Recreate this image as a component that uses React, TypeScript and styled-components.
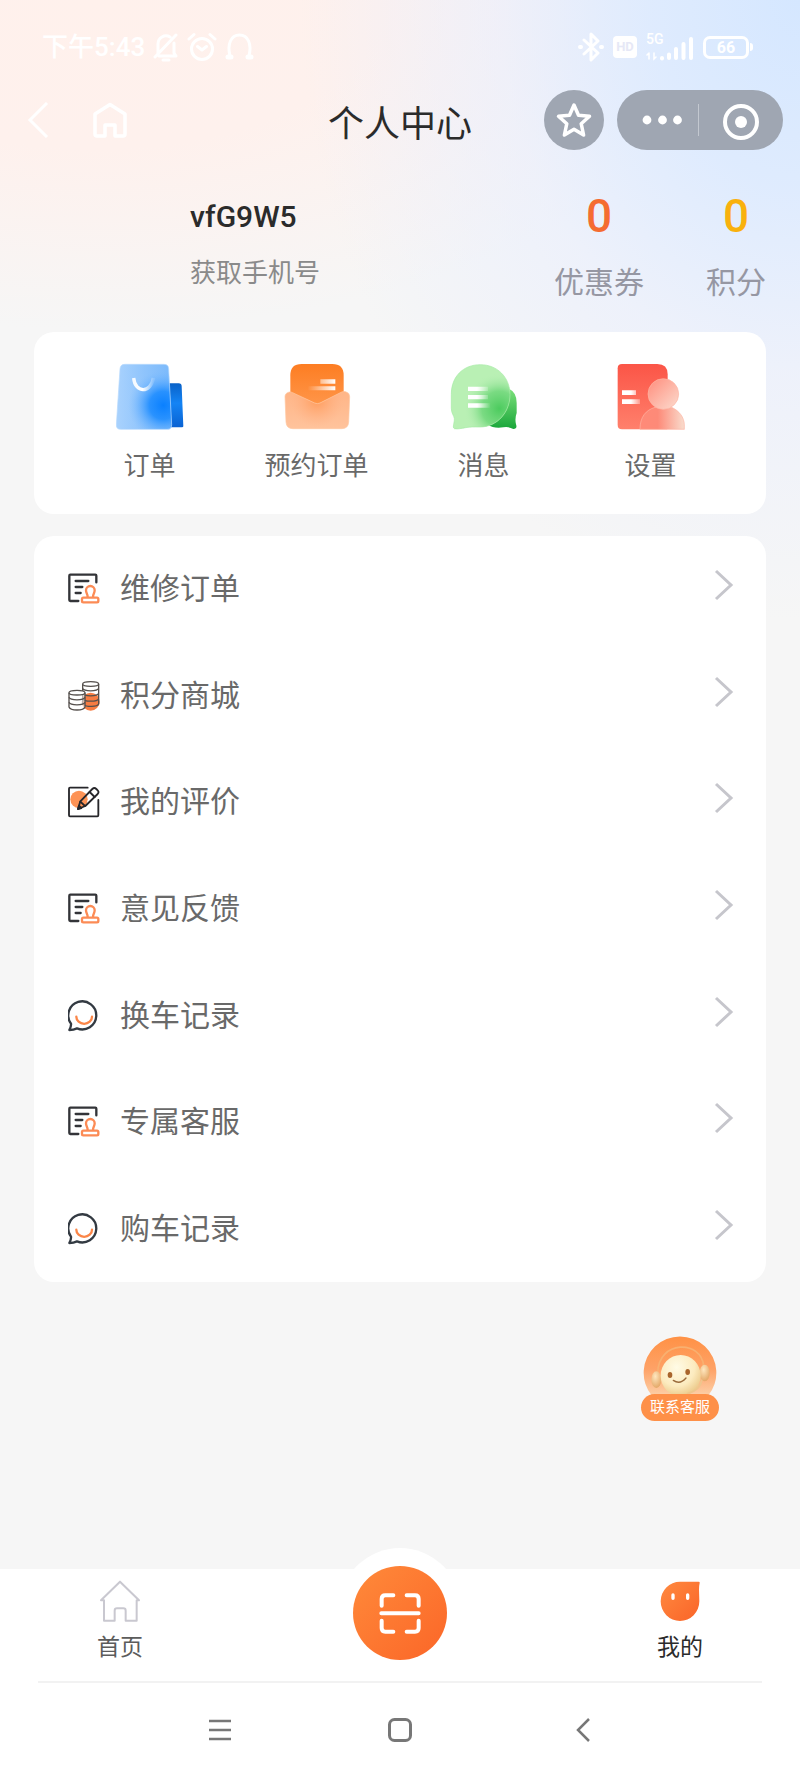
import React from "react";
import styled, { createGlobalStyle } from "styled-components";

const GlobalStyle = createGlobalStyle`
  * { box-sizing: border-box; }
  body {
    margin: 0;
    background: #f7f7f7;
    font-family: Roboto, "Noto Sans CJK SC", sans-serif;
    color: #333;
  }
  button {
    border: 0;
    padding: 0;
    background: none;
    font: inherit;
    color: inherit;
    cursor: pointer;
  }
  a { color: inherit; text-decoration: none; }
  h1, h2, p, ul { margin: 0; padding: 0; font-weight: 400; }
  svg { display: block; flex: none; }
`;

const Page = styled.div`
  min-height: 100vh;
  display: flex;
  flex-direction: column;
  background:
    radial-gradient(ellipse 500px 620px at 100% 0, #d5e7ff 0%, rgba(220, 234, 255, 0.9) 30%, rgba(232, 238, 254, 0.6) 60%, rgba(246, 246, 246, 0) 100%) no-repeat,
    radial-gradient(ellipse 640px 330px at 12% 0, #fff1ec 0%, #fef1ed 45%, rgba(247, 247, 247, 0) 100%) no-repeat,
    #f6f6f6;
`;

/* ---------- status bar ---------- */

const StatusBar = styled.div`
  display: flex;
  align-items: center;
  justify-content: space-between;
  height: 84px;
  padding: 10px 47px 0 42px;
  color: #fff;
`;

const StatusGroup = styled.div<{ $gap: number }>`
  display: flex;
  align-items: center;
  gap: ${(p) => p.$gap}px;
`;

const Clock = styled.span`
  font-size: 26px;
  line-height: 28px;
  font-weight: 500;
`;

const HdBadge = styled.span`
  width: 24px;
  height: 22px;
  border-radius: 4px;
  background: #fff;
  color: #e6e8f6;
  font-size: 13px;
  line-height: 22px;
  font-weight: 700;
  text-align: center;
`;

const Network = styled.div`
  display: flex;
  flex-direction: column;
  height: 28px;
  font-size: 14px;
  line-height: 12px;
  font-weight: 500;
`;

const SignalRow = styled.div`
  display: flex;
  align-items: flex-end;
  margin-top: -8px;
`;

const Battery = styled.span`
  display: flex;
  align-items: center;
  gap: 1px;
  &::after {
    content: "";
    width: 3px;
    height: 8px;
    border-radius: 0 3px 3px 0;
    background: #fff;
  }
`;

const BatteryLevel = styled.span`
  width: 46px;
  height: 23px;
  border: 3px solid #fff;
  border-radius: 7px;
  font-size: 16px;
  line-height: 18px;
  font-weight: 700;
  text-align: center;
`;

/* ---------- navigation ---------- */

const NavBar = styled.header`
  display: grid;
  grid-template-columns: 1fr auto 1fr;
  align-items: center;
  height: 72px;
  padding: 0 17px;
`;

const NavLeft = styled.div`
  display: flex;
  align-items: center;
  gap: 44px;
  padding-left: 10px;
`;

const NavRight = styled.div`
  display: flex;
  justify-content: flex-end;
  gap: 13px;
`;

const Title = styled.h1`
  padding-top: 10px;
  font-size: 36px;
  line-height: 40px;
  color: #2b2b2b;
`;

const RoundButton = styled.button`
  display: grid;
  place-items: center;
  width: 60px;
  height: 60px;
  border-radius: 50%;
  background: #9fa6b2;
`;

const Capsule = styled.div`
  display: flex;
  align-items: center;
  width: 166px;
  height: 60px;
  padding: 0 1px 0 9px;
  border-radius: 30px;
  background: #9fa6b2;
`;

const CapsuleButton = styled.button`
  flex: 1 1 0;
  display: grid;
  place-items: center;
  height: 32px;
  & + & {
    flex-grow: 1.15;
    border-left: 1px solid #c3c8d0;
  }
`;

/* ---------- profile ---------- */

const Profile = styled.section`
  display: flex;
  justify-content: space-between;
  height: 176px;
  padding: 32px 34px 0 190px;
`;

const Identity = styled.div`
  display: flex;
  flex-direction: column;
  align-items: flex-start;
  gap: 18px;
  padding-top: 9px;
`;

const UserName = styled.h2`
  font-size: 30px;
  line-height: 40px;
  font-weight: 500;
  color: #2b2b2b;
`;

const PhoneButton = styled.button`
  font-size: 26px;
  line-height: 36px;
  color: #8a8a8a;
`;

const Stats = styled.div`
  display: flex;
  gap: 62px;
`;

const Stat = styled.a`
  display: flex;
  flex-direction: column;
  align-items: center;
  gap: 19px;
`;

const StatValue = styled.span<{ $color: string }>`
  font-size: 46px;
  line-height: 56px;
  font-weight: 500;
  color: ${(p) => p.$color};
`;

const StatLabel = styled.span`
  font-size: 30px;
  line-height: 40px;
  color: #9697a3;
`;

/* ---------- cards ---------- */

const Content = styled.main`
  display: flex;
  flex-direction: column;
  gap: 22px;
  padding: 0 34px;
`;

const ShortcutCard = styled.nav`
  display: grid;
  grid-template-columns: repeat(4, 1fr);
  padding: 31px 32px 28px;
  border-radius: 20px;
  background: #fff;
`;

const Shortcut = styled.a`
  display: flex;
  flex-direction: column;
  align-items: center;
  gap: 15px;
  font-size: 26px;
  line-height: 40px;
  color: #696969;
`;

const MenuCard = styled.ul`
  display: grid;
  grid-auto-rows: 1fr;
  min-height: 746px;
  border-radius: 20px;
  background: #fff;
  list-style: none;
`;

const MenuLink = styled.a`
  display: flex;
  align-items: center;
  gap: 20px;
  height: 100%;
  padding: 0 32px 0 34px;
  font-size: 30px;
  line-height: 40px;
  color: #696969;
`;

const MenuLabel = styled.span`
  flex: 1;
`;

const Arrow = styled.svg`
  margin-bottom: 8px;
`;

/* ---------- customer service ---------- */

const ServiceButton = styled.button`
  display: flex;
  flex-direction: column;
  align-items: center;
  align-self: flex-end;
  margin: 54px 81px 40px 0;
`;

const ServiceLabel = styled.span`
  width: 78px;
  margin-top: -2px;
  border-radius: 14px;
  background: #fe9048;
  color: #fff;
  font-size: 15px;
  line-height: 27px;
  font-weight: 400;
`;

/* ---------- bottom bars ---------- */

const TabBar = styled.nav`
  display: grid;
  grid-template-columns: 3fr 4fr 3fr;
  align-items: start;
  justify-items: center;
  height: 112px;
  margin-top: auto;
  background: #fff;
`;

const Tab = styled.a<{ $active?: boolean }>`
  display: flex;
  flex-direction: column;
  align-items: center;
  gap: 10px;
  padding-top: 11px;
  font-size: 23px;
  line-height: 32px;
  color: ${(p) => (p.$active ? "#2b2b2b" : "#5c5c5c")};
`;

const ScanHolder = styled.div`
  display: flex;
  align-items: flex-start;
  justify-content: center;
  width: 122px;
  height: 122px;
  margin-top: -21px;
  padding-top: 18px;
  border-radius: 50%;
  background: #fff;
`;

const ScanButton = styled.button`
  display: grid;
  place-items: center;
  width: 94px;
  height: 94px;
  border-radius: 50%;
  background: linear-gradient(135deg, #ff8a3a, #fb6628);
`;

const SystemBar = styled.div`
  background: #fff;
`;

const SystemKeys = styled.div`
  display: flex;
  justify-content: space-between;
  align-items: center;
  height: 97px;
  margin: 0 38px;
  padding: 0 168px 2px;
  border-top: 2px solid #f2f2f2;
`;

const SystemKey = styled.button`
  display: grid;
  place-items: center;
  width: 28px;
  height: 28px;
`;

/* ---------- icons ---------- */

const BellOffIcon = () => (
  <svg width="26" height="30" viewBox="0 0 26 30" fill="none" stroke="#fff" strokeWidth="3" strokeLinecap="round" strokeLinejoin="round">
    <path d="M5 21V12a8 8 0 0 1 12-7M21 11v10l2 3H6M2 25 23 3" />
    <path d="M10 28h6" />
  </svg>
);

const AlarmIcon = () => (
  <svg width="30" height="30" viewBox="0 0 30 30" fill="none" stroke="#fff" strokeWidth="3" strokeLinecap="round" strokeLinejoin="round">
    <circle cx="15" cy="17" r="10.5" />
    <path d="M2 7 7 2.500M28 7l-5-4.500M10.500 14.500 15 18l4.500-3.500" />
  </svg>
);

const HeadphonesIcon = () => (
  <svg width="29" height="30" viewBox="0 0 29 30" fill="none" stroke="#fff" strokeWidth="3" strokeLinecap="round">
    <path d="M5 24C2 12 6 3 14.500 3S27 12 24 24" />
    <path d="M3 25h3M23 25h3" strokeWidth="5" />
  </svg>
);

const BluetoothIcon = () => (
  <svg width="26" height="30" viewBox="0 0 26 30" fill="none" stroke="#fff" strokeWidth="3" strokeLinejoin="round" strokeLinecap="round">
    <path d="M6 8l14 13-7 7V2l7 7L6 22" />
    <path d="M2 15h1M23 15h1" strokeWidth="4" />
  </svg>
);

const SignalIcon = () => (
  <svg width="48" height="24" viewBox="0 0 48 24" fill="none" stroke="#fff" strokeLinecap="round">
    <path d="M3 16v6M1 18l2-2M8 16v6l2-2" strokeWidth="1.500" />
    <path d="M16 21v.5M23 17.500V21M30 12v9M37.500 7v14M45 2v19" strokeWidth="4" />
  </svg>
);

const BackIcon = () => (
  <svg width="22" height="36" viewBox="0 0 22 36" fill="none" stroke="#fff" strokeWidth="3">
    <path d="M20 1 3 18l17 17" />
  </svg>
);

const NavHomeIcon = () => (
  <svg width="34" height="36" viewBox="0 0 34 36" fill="none" stroke="#fff" strokeWidth="3.500" strokeLinejoin="round">
    <path d="M2 12 17 2.500 32 12v20q0 2-2 2h-8V23H12v11H4q-2 0-2-2Z" />
  </svg>
);

const StarIcon = () => (
  <svg width="36" height="36" viewBox="0 0 36 36" fill="none" stroke="#fff" strokeWidth="3.500" strokeLinejoin="round">
    <path d="m18 3 4.500 10.300 11 1-8.300 7.400L27.600 33 18 27.200 8.400 33l2.400-11.300L2.500 14.300l11-1Z" />
  </svg>
);

const MoreIcon = () => (
  <svg width="40" height="10" viewBox="0 0 40 10" fill="#fff">
    <circle cx="5" cy="5" r="4.400" />
    <circle cx="20.500" cy="5" r="4.400" />
    <circle cx="35.500" cy="5" r="4.400" />
  </svg>
);

const TargetIcon = () => (
  <svg width="36" height="36" viewBox="0 0 36 36">
    <circle cx="18" cy="18" r="16" fill="none" stroke="#fff" strokeWidth="4" />
    <circle cx="18" cy="18" r="6" fill="#fff" />
  </svg>
);

const BagIcon = () => (
  <svg width="68" height="68" viewBox="48 68 204 204">
    <defs>
      <linearGradient id="bagBack" x1="0" y1="0" x2="0" y2="1">
        <stop offset="0" stopColor="#0a62c8" />
        <stop offset=".45" stopColor="#1484f5" />
        <stop offset="1" stopColor="#0a62d2" />
      </linearGradient>
      <linearGradient id="bagFront" x1="0" y1="0" x2="1" y2="0">
        <stop offset="0" stopColor="#a9d2fd" />
        <stop offset=".5" stopColor="#8fc4fc" />
        <stop offset="1" stopColor="#7ab9fb" />
      </linearGradient>
      <radialGradient id="bagGlow" cx="190" cy="195" r="105" gradientUnits="userSpaceOnUse">
        <stop offset="0" stopColor="#0a80ff" />
        <stop offset=".4" stopColor="#1f8dff" stopOpacity=".9" />
        <stop offset="1" stopColor="#7dbcff" stopOpacity="0" />
      </radialGradient>
      <linearGradient id="bagHandle" x1="0" y1="0" x2="1" y2="0">
        <stop offset="0" stopColor="#fff" stopOpacity=".9" />
        <stop offset=".45" stopColor="#fff" />
        <stop offset="1" stopColor="#fff" stopOpacity=".15" />
      </linearGradient>
    </defs>
    <path d="M200 129h36q9 0 9 9l5 120q0 3-4 3h-46Z" fill="url(#bagBack)" />
    <path d="M74 72h118q13 0 14 13l9 168q0 14-13 14H62q-13 0-13-13L60 86q1-14 14-14Z" fill="url(#bagFront)" />
    <path d="M74 72h118q13 0 14 13l9 168q0 14-13 14H62q-13 0-13-13L60 86q1-14 14-14Z" fill="url(#bagGlow)" stroke="#b7dafd" strokeWidth="2" />
    <path d="M101 113c4 46 52 47 59 0" fill="none" stroke="url(#bagHandle)" strokeWidth="10" />
  </svg>
);

const EnvelopeIcon = () => (
  <svg width="68" height="68" viewBox="548 68 204 204">
    <defs>
      <linearGradient id="envBack" x1="0" y1="0" x2="0" y2="1">
        <stop offset="0" stopColor="#fd7d22" />
        <stop offset="1" stopColor="#ff9a50" />
      </linearGradient>
      <linearGradient id="envFront" x1="0" y1="0" x2="0" y2="1">
        <stop offset="0" stopColor="#ffb587" />
        <stop offset="1" stopColor="#ffc39c" />
      </linearGradient>
      <radialGradient id="envGlow" cx="650" cy="180" r="80" gradientUnits="userSpaceOnUse">
        <stop offset="0" stopColor="#ff9c5c" />
        <stop offset="1" stopColor="#ffb184" stopOpacity="0" />
      </radialGradient>
      <linearGradient id="envLine" x1="0" y1="0" x2="1" y2="0">
        <stop offset="0" stopColor="#fff" stopOpacity="0" />
        <stop offset="1" stopColor="#fff" />
      </linearGradient>
    </defs>
    <path d="M604 71h92q34 0 34 34v110H570V105q0-34 34-34Z" fill="url(#envBack)" />
    <path d="M660 117h45v13h-45ZM622 138h83v12h-83Z" fill="url(#envLine)" />
    <path d="M567 155q5-1 10 2l66 31q8 4 16 0l65-33q6-3 12-1 12 3 12 15l-3 76q-1 20-21 20H578q-20 0-21-20l-3-76q0-11 13-14Z" fill="url(#envFront)" />
    <path d="M567 155q5-1 10 2l66 31q8 4 16 0l65-33q6-3 12-1 12 3 12 15l-3 76q-1 20-21 20H578q-20 0-21-20l-3-76q0-11 13-14Z" fill="url(#envGlow)" stroke="#ffc7a0" strokeWidth="2" />
  </svg>
);

const MessageIcon = () => (
  <svg width="68" height="68" viewBox="60 68 204 204">
    <defs>
      <linearGradient id="msgBack" x1="0" y1="0" x2="0" y2="1">
        <stop offset="0" stopColor="#7be07a" />
        <stop offset="1" stopColor="#19a63a" />
      </linearGradient>
      <radialGradient id="msgGlow" cx="208" cy="205" r="105" gradientUnits="userSpaceOnUse">
        <stop offset="0" stopColor="#4ccb5e" />
        <stop offset=".5" stopColor="#6fd77a" stopOpacity=".85" />
        <stop offset="1" stopColor="#b5eeb3" stopOpacity="0" />
      </radialGradient>
      <linearGradient id="msgLine" x1="0" y1="0" x2="1" y2="0">
        <stop offset=".4" stopColor="#fff" />
        <stop offset="1" stopColor="#fff" stopOpacity="0" />
      </linearGradient>
    </defs>
    <path d="M238 146q22 10 22 42v30q-6 16-2 34 5 14-8 14-14-8-30-5-30 4-46-8Z" fill="url(#msgBack)" />
    <path d="M64 162C64 108 100 73 151 73s89 38 89 90-38 97-90 97c-20 0-26-1-43 2-12 2-24 5-34 3-7-4 1-18 0-30-1-10-9-15-9-31Z" fill="#b9f0b4" />
    <path d="M64 162C64 108 100 73 151 73s89 38 89 90-38 97-90 97c-20 0-26-1-43 2-12 2-24 5-34 3-7-4 1-18 0-30-1-10-9-15-9-31Z" fill="url(#msgGlow)" stroke="#a4eaa4" strokeWidth="2" />
    <path d="M114 139h60v13h-60ZM114 164h60v13h-60ZM114 189h68v13h-68Z" fill="url(#msgLine)" />
  </svg>
);

const SettingsIcon = () => (
  <svg width="68" height="68" viewBox="562 68 204 204">
    <defs>
      <linearGradient id="setBack" x1="0" y1="0" x2="0" y2="1">
        <stop offset="0" stopColor="#fb5547" />
        <stop offset="1" stopColor="#ff806c" />
      </linearGradient>
      <linearGradient id="setHead" x1="0" y1="0" x2="1" y2="1">
        <stop offset="0" stopColor="#ff8d7c" />
        <stop offset="1" stopColor="#fcdccf" />
      </linearGradient>
      <linearGradient id="setBody" x1="0" y1="0" x2="1" y2="0">
        <stop offset="0" stopColor="#ff8a78" />
        <stop offset=".4" stopColor="#fd8a78" />
        <stop offset="1" stopColor="#f9dccd" />
      </linearGradient>
      <linearGradient id="setLine" x1="0" y1="0" x2="1" y2="0">
        <stop offset=".5" stopColor="#fff" />
        <stop offset="1" stopColor="#fff" stopOpacity=".3" />
      </linearGradient>
    </defs>
    <path d="M577 71h106q31 0 31 31v165H577q-13 0-13-13V84q0-13 13-13Z" fill="url(#setBack)" />
    <path d="M577 150h42v14h-42ZM577 177h54v14h-54Z" fill="url(#setLine)" />
    <path d="M713 200h54v72h-54Z" fill="#fff" />
    <path d="M631 267c0-38 18-58 45-66q24 9 50 0c22 10 38 30 38 53v13Z" fill="url(#setBody)" stroke="#fdb5a5" strokeWidth="2" />
    <circle cx="701" cy="161" r="46" fill="url(#setHead)" stroke="#fdb5a5" strokeWidth="2" />
  </svg>
);

const DocIcon = () => (
  <svg width="32" height="32" viewBox="113 130 96 96" fill="none" strokeLinecap="round" strokeLinejoin="round">
    <path d="M198 158v-20q0-3-3-3h-75q-3 0-3 3v73q0 3 3 3h24" stroke="#333438" strokeWidth="7" />
    <path d="M136 154h38M136 172h20M136 190h15" stroke="#333438" strokeWidth="7" />
    <path d="M172 202c0-10-5-11-5-20a13 13 0 0 1 26 0c0 9-5 10-5 20M159 204h41q4 0 4 4v6q0 4-4 4h-41q-4 0-4-4v-6q0-4 4-4Z" stroke="#fc8b55" strokeWidth="7" />
  </svg>
);

const CoinsIcon = () => (
  <svg width="32" height="32" viewBox="113 449 96 96" fill="none">
    <circle cx="181" cy="514" r="27" fill="#f77c42" />
    <g stroke="#55504d" strokeWidth="4">
      <path d="M157 461v60M205 461v60M157 474c4 10 44 10 48 0M157 489c4 10 44 10 48 0M157 505c4 10 44 10 48 0M160 522c8 9 41 8 45-1" />
      <ellipse cx="181" cy="461" rx="24" ry="7" fill="#fff" />
      <path d="M116 487v43c4 12 44 12 48 0v-43" fill="#fff" fillOpacity=".55" />
      <path d="M116 501c4 10 44 10 48 0M116 516c4 10 44 10 48 0" />
      <ellipse cx="140" cy="487" rx="24" ry="7" fill="#fff" />
    </g>
  </svg>
);

const EditIcon = () => (
  <svg width="32" height="32" viewBox="113 768 96 96" fill="none" strokeLinecap="round" strokeLinejoin="round">
    <circle cx="146" cy="808" r="26" fill="#fd9356" />
    <path d="M172 773h-53q-3 0-3 3v80q0 3 3 3h82q3 0 3-3v-46" stroke="#26262a" strokeWidth="5.500" />
    <path d="m150 814 36-37q6-6 12 0l4 4q5 5 0 11l-37 36-22 9Z" stroke="#26262a" strokeWidth="5.500" />
    <path d="m178 786 15 15M150 815l14 13M143 837l3-10 7 7Z" stroke="#26262a" strokeWidth="5.500" />
  </svg>
);

const ChatIcon = () => (
  <svg width="32" height="32" viewBox="113 418 96 96" fill="none" strokeLinecap="round" strokeLinejoin="round">
    <path d="M117 508c4-7 6-12 5-19a42 42 0 1 1 18 14c-8 4-14 5-23 5Z" stroke="#333a42" strokeWidth="7" />
    <path d="M138 468a23 21 0 0 0 47 0" stroke="#fb8648" strokeWidth="7" />
  </svg>
);

const RobotIcon = () => (
  <svg width="74" height="60" viewBox="130 75 222 180">
    <defs>
      <linearGradient id="botBg" x1="0" y1="0" x2="0" y2="1">
        <stop offset="0" stopColor="#ff9145" />
        <stop offset=".55" stopColor="#fea267" />
        <stop offset="1" stopColor="#fdd0a8" />
      </linearGradient>
      <radialGradient id="botFace" cx=".4" cy=".3" r=".75">
        <stop offset="0" stopColor="#fffbe6" />
        <stop offset=".6" stopColor="#fcebbf" />
        <stop offset="1" stopColor="#e9c583" />
      </radialGradient>
      <radialGradient id="botEar" cx=".4" cy=".3" r=".8">
        <stop offset="0" stopColor="#ffe7bf" />
        <stop offset="1" stopColor="#e0a05c" />
      </radialGradient>
    </defs>
    <path d="M157 255A109 109 0 1 1 325 255Z" fill="url(#botBg)" />
    <path d="M174 186C176 86 306 86 312 166" fill="none" stroke="#f8b070" strokeWidth="5" />
    <ellipse cx="170" cy="206" rx="15" ry="25" fill="url(#botEar)" />
    <ellipse cx="315" cy="186" rx="15" ry="25" fill="url(#botEar)" />
    <ellipse cx="243" cy="194" rx="60" ry="62" fill="url(#botFace)" />
    <path d="M306 208c-2 18-16 32-42 40" fill="none" stroke="#eec68d" strokeWidth="5" strokeLinecap="round" />
    <ellipse cx="211" cy="192" rx="7" ry="9" fill="#a9652c" />
    <ellipse cx="264" cy="183" rx="7" ry="9" fill="#a9652c" />
    <path d="M221 208q20 14 38-7" fill="none" stroke="#9a6a3a" strokeWidth="4" strokeLinecap="round" />
  </svg>
);

const TabHomeIcon = () => (
  <svg width="42" height="42" viewBox="117 58 126 126" fill="none" stroke="#c9c8d0" strokeWidth="6" strokeLinejoin="round" strokeLinecap="round">
    <path d="M132 119h-9l57-56 57 56h-7v61h-33v-30q0-7-7-7h-19q-7 0-7 7v30h-32Z" />
  </svg>
);

const TabMeIcon = () => (
  <svg width="42" height="42" viewBox="180 58 126 126">
    <defs>
      <linearGradient id="meFill" x1="0" y1="0" x2="1" y2="1">
        <stop offset="0" stopColor="#ff8a40" />
        <stop offset="1" stopColor="#fa6428" />
      </linearGradient>
    </defs>
    <path d="M243 63h56q4 0 3 4-2 8-2 20l1 35a58 59 0 1 1-58-59Z" fill="url(#meFill)" />
    <path d="M222 103v10M266 103v10" stroke="#fff" strokeWidth="10" strokeLinecap="round" />
  </svg>
);

const ScanIcon = () => (
  <svg width="42" height="42" viewBox="148 184 126 126" fill="none" stroke="#fff" strokeWidth="12" strokeLinecap="round" strokeLinejoin="round">
    <path d="M191 194h-24q-11 0-11 11v20M231 194h25q11 0 11 11v20M156 270v22q0 11 11 11h24M267 270v22q0 11-11 11h-25M155 248h112" />
  </svg>
);

/* ---------- data ---------- */

const shortcuts = [
  { label: "订单", Icon: BagIcon },
  { label: "预约订单", Icon: EnvelopeIcon },
  { label: "消息", Icon: MessageIcon },
  { label: "设置", Icon: SettingsIcon },
];

const menu = [
  { label: "维修订单", Icon: DocIcon },
  { label: "积分商城", Icon: CoinsIcon },
  { label: "我的评价", Icon: EditIcon },
  { label: "意见反馈", Icon: DocIcon },
  { label: "换车记录", Icon: ChatIcon },
  { label: "专属客服", Icon: DocIcon },
  { label: "购车记录", Icon: ChatIcon },
];

export default function App() {
  return (
    <Page>
      <GlobalStyle />

      <StatusBar>
        <StatusGroup $gap={8}>
          <Clock>下午5:43</Clock>
          <BellOffIcon />
          <AlarmIcon />
          <HeadphonesIcon />
        </StatusGroup>
        <StatusGroup $gap={9}>
          <BluetoothIcon />
          <HdBadge>HD</HdBadge>
          <Network>
            5G
            <SignalRow>
              <SignalIcon />
            </SignalRow>
          </Network>
          <Battery>
            <BatteryLevel>66</BatteryLevel>
          </Battery>
        </StatusGroup>
      </StatusBar>

      <NavBar>
        <NavLeft>
          <button aria-label="返回"><BackIcon /></button>
          <button aria-label="主页"><NavHomeIcon /></button>
        </NavLeft>
        <Title>个人中心</Title>
        <NavRight>
          <RoundButton aria-label="收藏"><StarIcon /></RoundButton>
          <Capsule>
            <CapsuleButton aria-label="更多"><MoreIcon /></CapsuleButton>
            <CapsuleButton aria-label="关闭"><TargetIcon /></CapsuleButton>
          </Capsule>
        </NavRight>
      </NavBar>

      <Profile>
        <Identity>
          <UserName>vfG9W5</UserName>
          <PhoneButton>获取手机号</PhoneButton>
        </Identity>
        <Stats>
          <Stat href="#coupons">
            <StatValue $color="#f56c31">0</StatValue>
            <StatLabel>优惠券</StatLabel>
          </Stat>
          <Stat href="#points">
            <StatValue $color="#f9b10d">0</StatValue>
            <StatLabel>积分</StatLabel>
          </Stat>
        </Stats>
      </Profile>

      <Content>
        <ShortcutCard>
          {shortcuts.map(({ label, Icon }) => (
            <Shortcut key={label} href="#shortcut">
              <Icon />
              {label}
            </Shortcut>
          ))}
        </ShortcutCard>
        <MenuCard>
          {menu.map(({ label, Icon }) => (
            <li key={label}>
              <MenuLink href="#menu">
                <Icon />
                <MenuLabel>{label}</MenuLabel>
                <Arrow width="20" height="32" viewBox="0 0 20 32" fill="none" stroke="#c6c6cc" strokeWidth="3">
                  <path d="m2 2 15 14L2 30" />
                </Arrow>
              </MenuLink>
            </li>
          ))}
        </MenuCard>
      </Content>

      <ServiceButton>
        <RobotIcon />
        <ServiceLabel>联系客服</ServiceLabel>
      </ServiceButton>

      <TabBar>
        <Tab href="#home">
          <TabHomeIcon />
          首页
        </Tab>
        <ScanHolder>
          <ScanButton aria-label="扫一扫"><ScanIcon /></ScanButton>
        </ScanHolder>
        <Tab href="#me" $active>
          <TabMeIcon />
          我的
        </Tab>
      </TabBar>

      <SystemBar>
        <SystemKeys>
          <SystemKey aria-label="最近任务">
            <svg width="24" height="24" viewBox="0 0 24 24" stroke="#777" strokeWidth="2.500">
              <path d="M1 3h22M1 12h22M1 21h22" />
            </svg>
          </SystemKey>
          <SystemKey aria-label="桌面">
            <svg width="24" height="24" viewBox="0 0 24 24" fill="none" stroke="#777" strokeWidth="3">
              <rect x="1.500" y="1.500" width="21" height="21" rx="5" />
            </svg>
          </SystemKey>
          <SystemKey aria-label="上一页">
            <svg width="24" height="24" viewBox="0 0 24 24" fill="none" stroke="#777" strokeWidth="2.500">
              <path d="M21 1 10 12l11 11" />
            </svg>
          </SystemKey>
        </SystemKeys>
      </SystemBar>
    </Page>
  );
}
